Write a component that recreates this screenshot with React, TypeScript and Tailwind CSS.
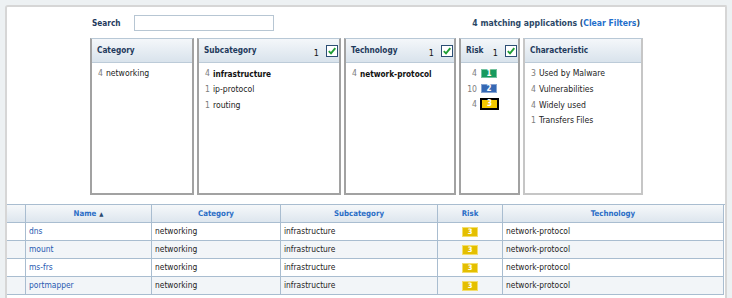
import React from "react";

function Check() {
  return (
    <svg width="12" height="12" viewBox="0 0 12 12">
      <rect x="0.5" y="0.5" width="11" height="11" fill="#ffffff" stroke="#2c4e74" />
      <path d="M2.8 6.2 L5 8.4 L9.3 3.1" stroke="#1f9e35" strokeWidth="1.9" fill="none" />
    </svg>
  );
}

function Header({ title, checked }: { title: string; checked?: boolean }) {
  return (
    <div className="h-[24px] flex items-center justify-between pl-[5px] pr-[1px] bg-gradient-to-b from-[#f4f7fa] to-[#d9e3ec] border-b border-[#bccbd8] font-bold text-[8.2px] text-[#1f3a5c]">
      <span>{title}</span>
      {checked && (
        <span className="flex items-center gap-[7px]">
          <span className="font-normal text-[#111] text-[9px] mt-[7px]">1</span>
          <Check />
        </span>
      )}
    </div>
  );
}

function Box({
  w,
  title,
  checked,
  light,
  children,
}: {
  w: string;
  title: string;
  checked?: boolean;
  light?: boolean;
  children: React.ReactNode;
}) {
  return (
    <div
      className={`${w} h-[157px] flex flex-col bg-white border-x-2 border-b-2 border-t border-t-[#b8c8d6] ${
        light ? "border-x-[#c6c6c6] border-b-[#c6c6c6]" : "border-x-[#a2a2a2] border-b-[#a2a2a2]"
      }`}
    >
      <Header title={title} checked={checked} />
      <div className="flex flex-col pt-[3px] pl-[6px]">{children}</div>
    </div>
  );
}

function Item({ n, t, bold }: { n: string; t: string; bold?: boolean }) {
  return (
    <div className="h-[15.7px] flex items-center text-[8.6px] whitespace-nowrap">
      <span className="text-[#7d7d7d] mr-[3px]">{n}</span>
      <span className={bold ? "font-bold text-[#111] text-[8.2px]" : "text-[#222]"}>{t}</span>
    </div>
  );
}

function RiskBadge({ n, color, selected }: { n: string; color: string; selected?: boolean }) {
  if (selected) {
    return (
      <span className="flex items-center justify-center border-2 border-black w-[19px] h-[12px] -ml-[1px]">
        <span
          className={`w-[15px] h-[8px] flex items-center justify-center text-white text-[8px] font-bold leading-none ${color}`}
        >
          {n}
        </span>
      </span>
    );
  }
  return (
    <span
      className={`w-[16px] h-[9px] flex items-center justify-center text-white text-[8px] font-bold leading-none border border-white/40 ${color}`}
    >
      {n}
    </span>
  );
}

function SmallBadge() {
  return (
    <span className="w-[16px] h-[10px] bg-[#e4bf00] border border-[#f4de6c] flex items-center justify-center text-[7.5px] font-bold text-white leading-none">
      3
    </span>
  );
}

const rows = ["dns", "mount", "ms-frs", "portmapper"];

export default function App() {
  return (
    <div className="w-[732px] h-[298px] bg-[#edf1f3] pt-[5px] pl-[5px] overflow-hidden font-['Tahoma','DejaVu_Sans_Condensed','DejaVu_Sans',sans-serif]">
      <div className="w-[722px] h-[293px] bg-white border-2 border-b-0 border-[#d6d6d6] rounded-tl-[3px] rounded-tr-[2px] flex flex-col">
        <div className="ml-[83px] w-[553px] flex flex-col">
          <div className="mt-[8px] h-[16px] flex items-center justify-between">
            <div className="flex items-center">
              <span className="pl-[2px] w-[44px] font-bold text-[8.2px] text-[#1f3a5c]">Search</span>
              <div className="w-[140px] h-[16px] border border-[#b7c6d3] bg-white" />
            </div>
            <span className="pr-[3px] font-bold text-[8.6px] text-[#2b4766]">
              4 matching applications (<span className="text-[#1f6fcc]">Clear Filters</span>)
            </span>
          </div>
          <div className="mt-[7px] flex gap-[3px]">
            <Box w="w-[104px]" title="Category">
              <Item n="4" t="networking" />
            </Box>
            <Box w="w-[144px]" title="Subcategory" checked>
              <Item n="4" t="infrastructure" bold />
              <Item n="1" t="ip-protocol" />
              <Item n="1" t="routing" />
            </Box>
            <Box w="w-[112px]" title="Technology" checked>
              <Item n="4" t="network-protocol" bold />
            </Box>
            <Box w="w-[61px]" title="Risk" checked>
              <div className="flex flex-col -ml-[6px]">
                {[
                  { c: "4", n: "1", col: "bg-[#169a5e]" },
                  { c: "10", n: "2", col: "bg-[#3568b4]" },
                  { c: "4", n: "3", col: "bg-[#f2c800]", sel: true },
                ].map((r, i) => (
                  <div key={i} className="h-[15.3px] flex items-center text-[8.6px]">
                    <span className="w-[16px] text-right text-[#7d7d7d]">{r.c}</span>
                    <span className="ml-[4px]">
                      <RiskBadge n={r.n} color={r.col} selected={r.sel} />
                    </span>
                  </div>
                ))}
              </div>
            </Box>
            <Box w="w-[120px]" title="Characteristic" light>
              <Item n="3" t="Used by Malware" />
              <Item n="4" t="Vulnerabilities" />
              <Item n="4" t="Widely used" />
              <Item n="1" t="Transfers Files" />
            </Box>
          </div>
        </div>
        <div className="mt-[9px] grid grid-cols-[19px_126px_129px_157px_65px_221px] border-t border-[#a9bdd0] text-[8.4px]">
          {["", "Name", "Category", "Subcategory", "Risk", "Technology"].map((h, i) => (
            <div
              key={h + i}
              className="h-[18px] flex items-center justify-center font-bold text-[7.8px] text-[#2a6dc6] bg-gradient-to-b from-[#f6f8fa] to-[#dde6ee] border-r border-b border-[#a9bdd0]"
            >
              {h}
              {h === "Name" && <span className="ml-[3px] text-[6px] text-[#2a4a70]">▲</span>}
            </div>
          ))}
          {rows.map((r, i) => {
            const bg = i % 2 === 1 ? "bg-[#f2f5f8]" : "bg-white";
            const cell = `h-[18px] flex items-center border-r border-b border-[#a9bdd0] ${bg}`;
            return (
              <React.Fragment key={r}>
                <div className={cell} />
                <div className={`${cell} pl-[3px] text-[#2458b0]`}>{r}</div>
                <div className={`${cell} pl-[3px] text-[#222]`}>networking</div>
                <div className={`${cell} pl-[3px] text-[#222]`}>infrastructure</div>
                <div className={`${cell} justify-center`}>
                  <SmallBadge />
                </div>
                <div className={`${cell} pl-[3px] text-[#222]`}>network-protocol</div>
              </React.Fragment>
            );
          })}
        </div>
      </div>
    </div>
  );
}
